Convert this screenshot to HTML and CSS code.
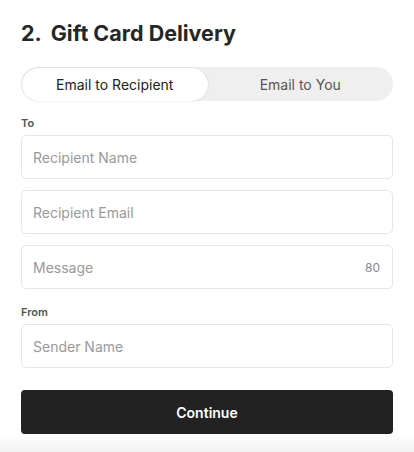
FILE: index.html
```html
<!DOCTYPE html>
<html>
<head>
  <title>Gift Card Delivery</title>
  <link rel="stylesheet" href="styles.css">
</head>
<body>
<div class="panel">
  <h2 class="title"><span class="step">2.</span>Gift Card Delivery</h2>

  <div class="toggle">
    <button class="tab active">Email to Recipient</button>
    <button class="tab">Email to You</button>
  </div>

  <div class="label">To</div>
  <div class="field"><input type="text" placeholder="Recipient Name"></div>
  <div class="field"><input type="text" placeholder="Recipient Email"></div>
  <div class="field"><input type="text" placeholder="Message"><span class="count">80</span></div>

  <div class="label from">From</div>
  <div class="field"><input type="text" placeholder="Sender Name"></div>

  <button class="continue">Continue</button>
</div>
<div class="fade"></div>
</body>
</html>
```

FILE: styles.css
```css
body {
  margin: 0;
  background: #fff;
  font-family: Inter, "Noto Sans", sans-serif;
  color: #222;
}
.panel {
  padding: 0 21px;
  display: flex;
  flex-direction: column;
}
.title {
  margin: 20px 0 0 0;
  font-size: 21.5px;
  font-weight: 650;
  line-height: 26px;
  color: #262626;
}
.step {
  margin-right: 9px;
}
.toggle {
  margin-top: 21px;
  display: flex;
  background: #efefef;
  border-radius: 17px;
  height: 34px;
}
.tab {
  flex: 1;
  border: none;
  background: transparent;
  font-family: Inter, "Noto Sans", sans-serif;
  font-size: 14px;
  color: #555;
  border-radius: 17px;
  padding: 0;
  cursor: pointer;
}
.tab.active {
  background: #fff;
  color: #222;
  margin: 1px 0 0 1px;
  box-shadow: 0 0 2px rgba(0, 0, 0, 0.18);
}
.label {
  margin-top: 16px;
  font-size: 11px;
  font-weight: 600;
  color: #555;
  line-height: 13px;
}
.label.from {
  margin-top: 17px;
}
.label + .field {
  margin-top: 5px;
}
.field {
  margin-top: 11px;
  height: 44px;
  border: 1px solid #e6e6e6;
  border-radius: 5px;
  display: flex;
  align-items: center;
  padding: 0 12px 0 11px;
  box-sizing: border-box;
}
.field input {
  flex: 1;
  border: none;
  outline: none;
  font-family: Inter, "Noto Sans", sans-serif;
  font-size: 14px;
  color: #222;
  padding: 0;
  background: transparent;
}
.field input::placeholder {
  color: #999;
}
.count {
  font-size: 12px;
  color: #888;
}
.continue {
  margin-top: 22px;
  height: 44px;
  border: none;
  border-radius: 4px;
  background: #222;
  color: #fff;
  font-family: Inter, "Noto Sans", sans-serif;
  font-size: 14px;
  font-weight: 600;
  cursor: pointer;
}
.fade {
  margin-top: 1px;
  height: 20px;
  background: linear-gradient(#fff, #eeeeee);
}
```
